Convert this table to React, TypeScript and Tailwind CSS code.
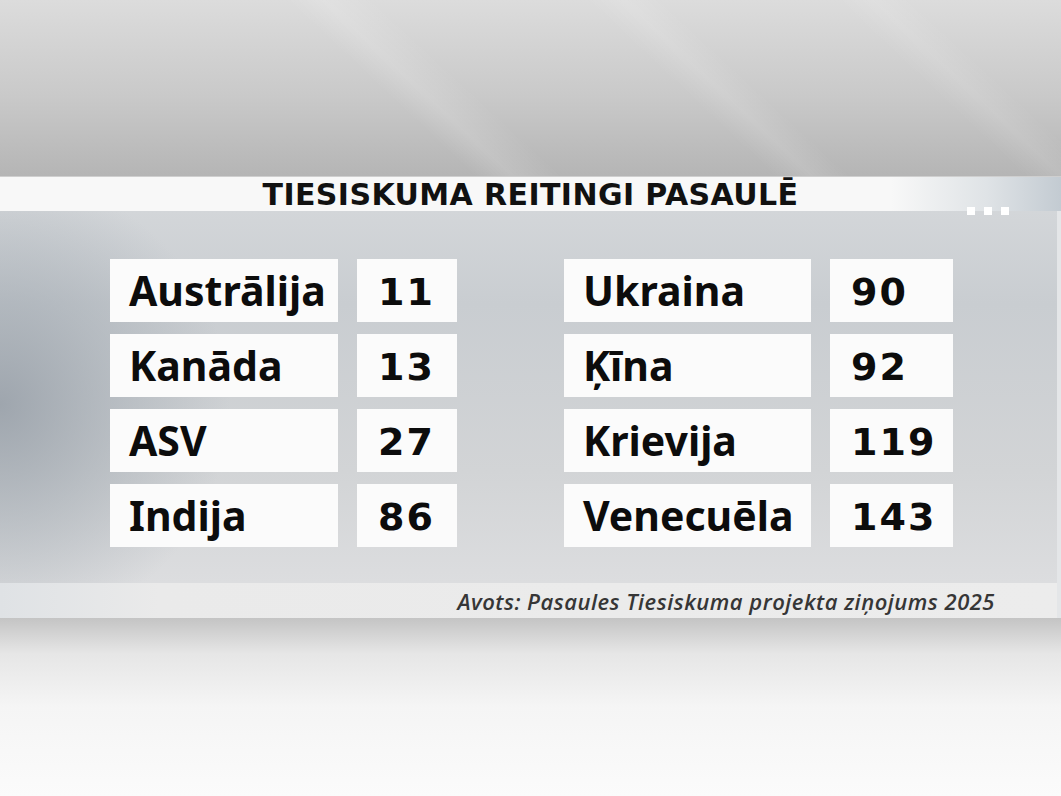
import React from "react";

const left = [
  { name: "Austrālija", rank: "11" },
  { name: "Kanāda", rank: "13" },
  { name: "ASV", rank: "27" },
  { name: "Indija", rank: "86" },
];

const right = [
  { name: "Ukraina", rank: "90" },
  { name: "Ķīna", rank: "92" },
  { name: "Krievija", rank: "119" },
  { name: "Venecuēla", rank: "143" },
];

function RankColumn({
  rows,
  nameW,
  rankW,
}: {
  rows: { name: string; rank: string }[];
  nameW: string;
  rankW: string;
}) {
  return (
    <div className="flex flex-col gap-[12px]">
      {rows.map((r) => (
        <div key={r.name} className="flex gap-[19px]">
          <div
            className={`${nameW} h-[63px] bg-[#fbfbfb] flex items-center pl-[19px] font-['Noto_Sans',sans-serif] font-bold text-[41px] text-[#0c0c0c] leading-none`}
          >
            {r.name}
          </div>
          <div
            className={`${rankW} h-[63px] bg-[#fbfbfb] flex items-center pl-[21px] pt-[2px] font-['DejaVu_Sans',sans-serif] font-bold text-[38px] tracking-[2px] text-[#0c0c0c] leading-none`}
          >
            {r.rank}
          </div>
        </div>
      ))}
    </div>
  );
}

export default function App() {
  return (
    <div className="w-[1061px] h-[796px] overflow-hidden flex flex-col bg-[#d8d8d8]">
      {/* studio backdrop */}
      <div className="h-[176px] bg-[linear-gradient(43deg,transparent_38%,rgba(255,255,255,0.14)_41%,transparent_45%,transparent_62%,rgba(255,255,255,0.12)_65%,transparent_68%,transparent_82%,rgba(255,255,255,0.1)_85%,transparent_88%),linear-gradient(180deg,#dcdcdc_0%,#c9c9c9_55%,#b5b5b5_100%)]" />

      {/* title bar */}
      <div className="relative h-[35px] border-t border-[#cfcfcf] bg-[linear-gradient(90deg,#f8f8f8_0%,#f8f8f8_84%,#dfe3e6_93%,#c3cbd2_100%)] flex items-center justify-center">
        <h1 className="font-['DejaVu_Sans',sans-serif] font-bold text-[30px] leading-none text-[#111] tracking-[0.4px] pt-[2px]">
          TIESISKUMA REITINGI PASAULĒ
        </h1>
        <div className="absolute left-[967px] top-[30px] flex gap-[9px]">
          <span className="w-[8px] h-[8px] bg-white" />
          <span className="w-[8px] h-[8px] bg-white" />
          <span className="w-[8px] h-[8px] bg-white" />
        </div>
      </div>

      {/* table panel */}
      <div className="h-[372px] pt-[48px] pl-[110px] border-r-[4px] border-[#e4e6e8] bg-[radial-gradient(ellipse_230px_230px_at_0%_52%,rgba(150,158,167,0.85)_0%,rgba(160,168,176,0.5)_50%,transparent_100%),linear-gradient(180deg,#d3d6d9_0%,#c9cdd1_25%,#d2d4d6_70%,#dcdddf_100%)] flex gap-[107px]">
        <RankColumn rows={left} nameW="w-[228px]" rankW="w-[100px]" />
        <RankColumn rows={right} nameW="w-[247px]" rankW="w-[123px]" />
      </div>

      {/* source strip */}
      <div className="h-[35px] bg-[linear-gradient(90deg,#dfe2e5_0%,#eaeaea_15%,#ececec_100%)] border-r-[4px] border-[#e4e6e8] flex items-center justify-end pr-[62px]">
        <p className="font-['Open_Sans',sans-serif] italic font-semibold text-[22px] tracking-[0.5px] text-[#363636] leading-none">
          Avots: Pasaules Tiesiskuma projekta ziņojums 2025
        </p>
      </div>

      {/* lower backdrop */}
      <div className="flex-1 bg-[linear-gradient(180deg,#c4c4c4_0%,#e6e6e6_20%,#f5f5f5_50%,#fbfbfb_100%)]" />
    </div>
  );
}
